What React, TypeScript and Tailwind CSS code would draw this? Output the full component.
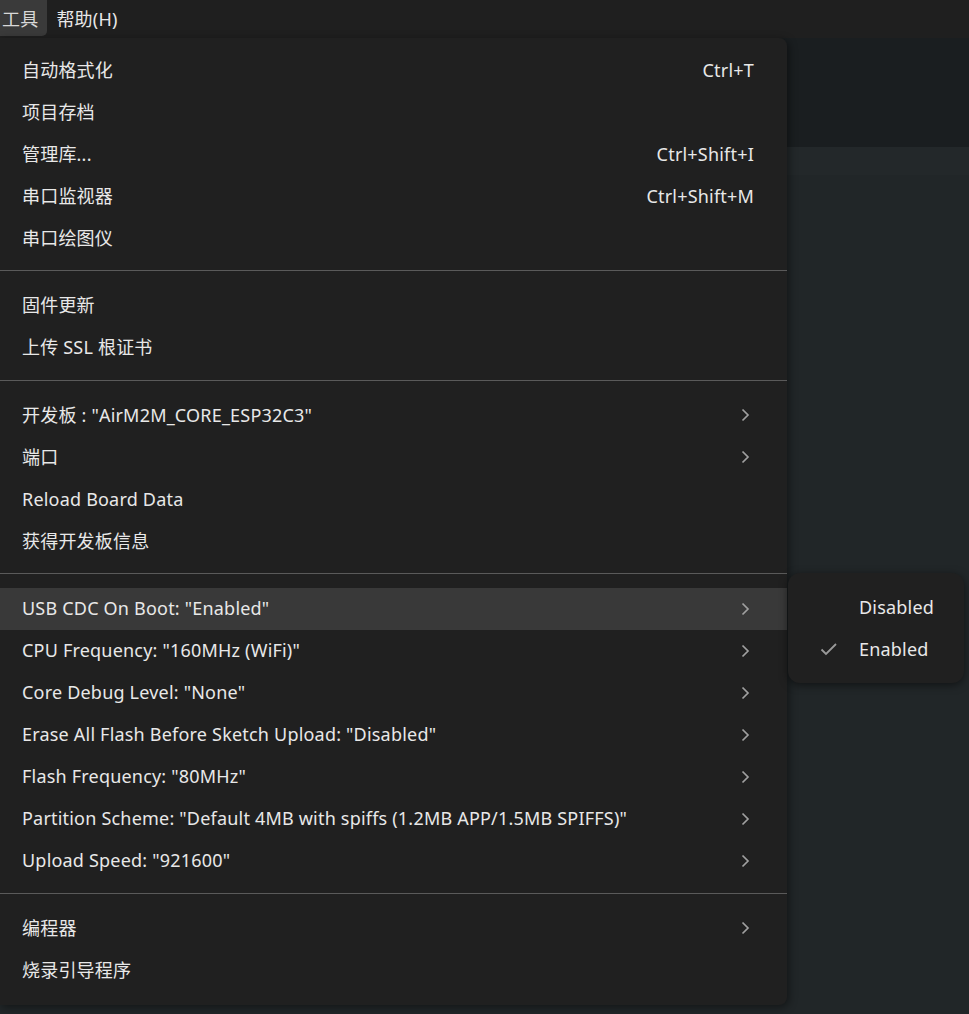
import React from 'react'

type Item = { label: string; shortcut?: string; sub?: boolean; active?: boolean }

const groups: Item[][] = [
  [
    { label: '自动格式化', shortcut: 'Ctrl+T' },
    { label: '项目存档' },
    { label: '管理库...', shortcut: 'Ctrl+Shift+I' },
    { label: '串口监视器', shortcut: 'Ctrl+Shift+M' },
    { label: '串口绘图仪' },
  ],
  [{ label: '固件更新' }, { label: '上传 SSL 根证书' }],
  [
    { label: '开发板 : "AirM2M_CORE_ESP32C3"', sub: true },
    { label: '端口', sub: true },
    { label: 'Reload Board Data' },
    { label: '获得开发板信息' },
  ],
  [
    { label: 'USB CDC On Boot: "Enabled"', sub: true, active: true },
    { label: 'CPU Frequency: "160MHz (WiFi)"', sub: true },
    { label: 'Core Debug Level: "None"', sub: true },
    { label: 'Erase All Flash Before Sketch Upload: "Disabled"', sub: true },
    { label: 'Flash Frequency: "80MHz"', sub: true },
    { label: 'Partition Scheme: "Default 4MB with spiffs (1.2MB APP/1.5MB SPIFFS)"', sub: true },
    { label: 'Upload Speed: "921600"', sub: true },
  ],
  [{ label: '编程器', sub: true }, { label: '烧录引导程序' }],
]

const Chevron = () => (
  <svg width="10" height="14" viewBox="0 0 10 14" fill="none">
    <path d="M1.5 1.5 L7 7 L1.5 12.5" stroke="#a0a0a0" strokeWidth="1.7" />
  </svg>
)

const Check = () => (
  <svg width="20" height="16" viewBox="0 0 20 16" fill="none">
    <path d="M2.5 8.5 L7 13 L17 3" stroke="#9a9a9a" strokeWidth="1.8" />
  </svg>
)

const MenuRow: React.FC<{ item: Item }> = ({ item }) => (
  <div
    className={`h-[42px] flex items-center pl-[22px] pr-[33px] ${item.active ? 'bg-[#393939]' : ''}`}
  >
    <span className="flex-1 whitespace-nowrap">{item.label}</span>
    {item.shortcut && <span className="whitespace-nowrap">{item.shortcut}</span>}
    {item.sub && (
      <span className="w-[12px] mr-[2px] flex justify-center">
        <Chevron />
      </span>
    )}
  </div>
)

const App: React.FC = () => {
  return (
    <div
      className="relative w-[969px] h-[1014px] overflow-hidden bg-[#212628] text-[#e8e8e8] text-[18px] tracking-[0.2px]"
      style={{ fontFamily: '"Noto Sans", "Noto Sans CJK SC", sans-serif' }}
    >
      <div className="h-[38px] bg-[#1f1f1f] flex items-start">
        <div className="h-[36px] pt-[3px] pl-[2px] pr-[9px] flex items-center bg-[#3a3a3a] rounded-br-[5px] text-[#d8d8d8]">
          工具
        </div>
        <div className="h-[36px] pt-[3px] ml-[9px] flex items-center">帮助(H)</div>
      </div>
      <div className="h-[109px] bg-[#1a1e20]" />
      <div className="h-[28px] bg-[#23282a]" />

      <div className="absolute left-0 top-[38px] w-[787px] bg-[#202020] rounded-r-[8px] shadow-[2px_2px_8px_rgba(0,0,0,0.45)] pt-[11px] pb-[14px]">
        {groups.map((group, gi) => (
          <div key={gi}>
            {gi > 0 && <div className="h-px bg-[#5a5a5a] mt-[11px] mb-[13.5px]" />}
            {group.map((item) => (
              <MenuRow key={item.label} item={item} />
            ))}
          </div>
        ))}
      </div>

      <div className="absolute left-[788px] top-[573px] w-[176px] bg-[#202020] rounded-[12px] shadow-[0_2px_8px_rgba(0,0,0,0.5)] pt-[14px] pb-[12px]">
        <div className="h-[42px] flex items-center pl-[71px] pb-[2px]">Disabled</div>
        <div className="h-[42px] flex items-center pb-[2px]">
          <span className="w-[71px] flex justify-end pr-[20px]">
            <Check />
          </span>
          Enabled
        </div>
      </div>
    </div>
  )
}

export default App
